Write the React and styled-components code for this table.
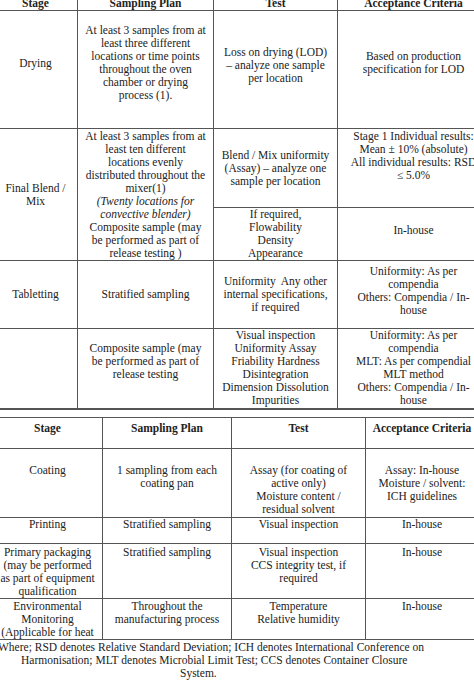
import React from "react";
import styled, { createGlobalStyle, css } from "styled-components";

const GlobalStyle = createGlobalStyle`
  html, body {
    margin: 0;
    padding: 0;
    background: #fff;
  }
  body {
    font-family: "Liberation Serif", "Times New Roman", serif;
    color: #222;
  }
`;

const Page = styled.div`
  width: 474px;
  height: 683px;
  overflow: hidden;
`;

const Table = styled.table`
  border-collapse: collapse;
  table-layout: fixed;
  width: ${(p) => p.$width}px;
  margin-left: ${(p) => p.$left}px;
  margin-top: ${(p) => p.$top}px;
  font-size: 11.5px;
  line-height: ${(p) => p.$lh}px;
`;

const Col = styled.col`
  width: ${(p) => p.$w}px;
`;

const Row = styled.tr`
  height: ${(p) => p.$h}px;
`;

const cellBase = css`
  border: 1px solid #555;
  padding: ${(p) => p.$pt || 0}px 2px ${(p) => p.$pb || 0}px;
  text-align: center;
  vertical-align: ${(p) => p.$align || "middle"};
  white-space: nowrap;
  overflow: hidden;
`;

const Cell = styled.td`
  ${cellBase}
  border-bottom-width: ${(p) => (p.$last ? 2 : 1)}px;
`;

const Head = styled.th`
  ${cellBase}
  font-weight: bold;
`;

const Em = styled.i`
  font-style: italic;
`;

const Note = styled.div`
  margin-top: 1px;
  font-size: 11.5px;
  line-height: 13px;
`;

const NoteLine = styled.div`
  white-space: nowrap;
  margin-left: ${(p) => p.$x}px;
`;

const Lines = ({ items }) =>
  items.map((t, i) => (
    <React.Fragment key={i}>
      {i > 0 && <br />}
      {t}
    </React.Fragment>
  ));

export default function App() {
  return (
    <Page>
      <GlobalStyle />
      <Table $width={496} $left={-7} $top={-9} $lh={13}>
        <colgroup>
          <Col $w={84} />
          <Col $w={136} />
          <Col $w={124} />
          <Col $w={152} />
        </colgroup>
        <thead>
          <Row $h={19}>
            <Head $align="bottom">Stage</Head>
            <Head $align="bottom">Sampling Plan</Head>
            <Head $align="bottom">Test</Head>
            <Head $align="bottom">Acceptance Criteria</Head>
          </Row>
        </thead>
        <tbody>
          <Row $h={118}>
            <Cell $pb={13}>Drying</Cell>
            <Cell $pb={13}>
              <Lines
                items={[
                  "At least 3 samples from at",
                  "least three different",
                  "locations or time points",
                  "throughout the oven",
                  "chamber or drying",
                  "process (1).",
                ]}
              />
            </Cell>
            <Cell $pb={8}>
              <Lines
                items={[
                  "Loss on drying (LOD)",
                  "– analyze one sample",
                  "per location",
                ]}
              />
            </Cell>
            <Cell $pb={13}>
              <Lines items={["Based on production", "specification for LOD"]} />
            </Cell>
          </Row>
          <Row $h={79}>
            <Cell rowSpan={2}>
              <Lines items={["Final Blend /", "Mix"]} />
            </Cell>
            <Cell rowSpan={2}>
              <Lines
                items={[
                  "At least 3 samples from at",
                  "least ten different",
                  "locations evenly",
                  "distributed throughout the",
                  "mixer(1)",
                  <Em key="a">(Twenty locations for</Em>,
                  <Em key="b">convective blender)</Em>,
                  "Composite sample (may",
                  "be performed as part of",
                  "release testing  )",
                ]}
              />
            </Cell>
            <Cell>
              <Lines
                items={[
                  "Blend / Mix uniformity",
                  "(Assay) – analyze one",
                  "sample per location",
                ]}
              />
            </Cell>
            <Cell $pb={24}>
              <Lines
                items={[
                  "Stage 1 Individual results:",
                  "Mean ± 10% (absolute)",
                  "All individual results: RSD",
                  "≤ 5.0%",
                ]}
              />
            </Cell>
          </Row>
          <Row $h={50}>
            <Cell>
              <Lines
                items={["If required,", "Flowability", "Density", "Appearance"]}
              />
            </Cell>
            <Cell $pb={8}>In-house</Cell>
          </Row>
          <Row $h={68}>
            <Cell>Tabletting</Cell>
            <Cell>Stratified sampling</Cell>
            <Cell>
              <Lines
                items={[
                  "Uniformity\u00a0 Any other",
                  "internal specifications,",
                  "if required",
                ]}
              />
            </Cell>
            <Cell $pb={8}>
              <Lines
                items={[
                  "Uniformity: As per",
                  "compendia",
                  "Others: Compendia / In-",
                  "house",
                ]}
              />
            </Cell>
          </Row>
          <Row $h={80}>
            <Cell $last />
            <Cell $last $pb={14}>
              <Lines
                items={[
                  "Composite sample (may",
                  "be performed as part of",
                  "release testing",
                ]}
              />
            </Cell>
            <Cell $last>
              <Lines
                items={[
                  "Visual inspection",
                  "Uniformity Assay",
                  "Friability Hardness",
                  "Disintegration",
                  "Dimension Dissolution",
                  "Impurities",
                ]}
              />
            </Cell>
            <Cell $last>
              <Lines
                items={[
                  "Uniformity: As per",
                  "compendia",
                  "MLT: As per compendial",
                  "MLT method",
                  "Others: Compendia / In-",
                  "house",
                ]}
              />
            </Cell>
          </Row>
        </tbody>
      </Table>

      <Table $width={486} $left={-8} $top={7} $lh={13}>
        <colgroup>
          <Col $w={110} />
          <Col $w={129} />
          <Col $w={134} />
          <Col $w={113} />
        </colgroup>
        <thead>
          <Row $h={31}>
            <Head $align="top" $pt={4}>Stage</Head>
            <Head $align="top" $pt={4}>Sampling Plan</Head>
            <Head $align="top" $pt={4}>Test</Head>
            <Head $align="top" $pt={4}>Acceptance Criteria</Head>
          </Row>
        </thead>
        <tbody>
          <Row $h={69}>
            <Cell $align="top" $pt={15}>Coating</Cell>
            <Cell $align="top" $pt={15}>
              <Lines items={["1 sampling from each", "coating pan"]} />
            </Cell>
            <Cell $align="top" $pt={15}>
              <Lines
                items={[
                  "Assay (for coating of",
                  "active only)",
                  "Moisture content /",
                  "residual solvent",
                ]}
              />
            </Cell>
            <Cell $align="top" $pt={15}>
              <Lines
                items={["Assay: In-house", "Moisture / solvent:", "ICH guidelines"]}
              />
            </Cell>
          </Row>
          <Row $h={26}>
            <Cell $align="top">Printing</Cell>
            <Cell $align="top">Stratified sampling</Cell>
            <Cell $align="top">Visual inspection</Cell>
            <Cell $align="top">In-house</Cell>
          </Row>
          <Row $h={54}>
            <Cell $align="top" $pt={2}>
              <Lines
                items={[
                  "Primary packaging",
                  "(may be performed",
                  "as part of equipment",
                  "qualification",
                ]}
              />
            </Cell>
            <Cell $align="top" $pt={2}>Stratified sampling</Cell>
            <Cell $align="top" $pt={2}>
              <Lines
                items={[
                  "Visual inspection",
                  "CCS integrity test, if",
                  "required",
                ]}
              />
            </Cell>
            <Cell $align="top" $pt={2}>In-house</Cell>
          </Row>
          <Row $h={41}>
            <Cell $align="top" $pt={1}>
              <Lines
                items={["Environmental", "Monitoring", "(Applicable for heat"]}
              />
            </Cell>
            <Cell $align="top" $pt={1}>
              <Lines items={["Throughout the", "manufacturing process"]} />
            </Cell>
            <Cell $align="top" $pt={1}>
              <Lines items={["Temperature", "Relative humidity"]} />
            </Cell>
            <Cell $align="top" $pt={1}>In-house</Cell>
          </Row>
        </tbody>
      </Table>

      <Note>
        <NoteLine $x={-2}>
          Where; RSD denotes Relative Standard Deviation; ICH denotes
          International Conference on
        </NoteLine>
        <NoteLine $x={21}>
          Harmonisation; MLT denotes Microbial Limit Test; CCS denotes Container
          Closure
        </NoteLine>
        <NoteLine $x={180}>System.</NoteLine>
      </Note>
    </Page>
  );
}
